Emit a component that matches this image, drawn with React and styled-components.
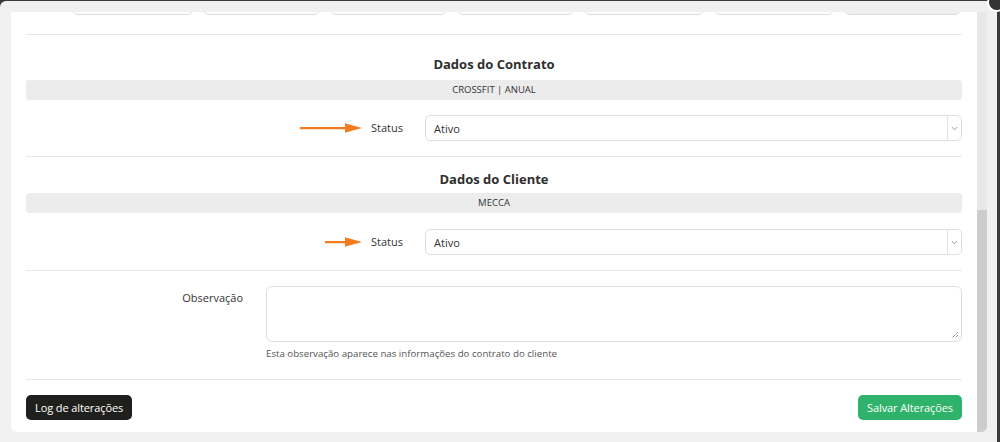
import React from "react";
import styled, { createGlobalStyle } from "styled-components";

const Global = createGlobalStyle`
  html, body { margin: 0; padding: 0; }
  body {
    background: #3a3a3a;
    font-family: "Open Sans", "Liberation Sans", sans-serif;
    color: #333;
    overflow: hidden;
  }
`;

const Page = styled.div`
  width: 1000px;
  height: 442px;
  padding-top: 1px;
  box-sizing: border-box;
  overflow: hidden;
  position: relative;
`;

const Dialog = styled.div`
  width: 997px;
  height: 460px;
  background: #f0f0f0;
  border-radius: 6px 0 0 6px;
  padding: 11px 10px 0 11px;
  box-sizing: border-box;
  display: flex;
  align-items: flex-start;
`;

const Close = styled.div`
  position: absolute;
  right: -6px;
  top: -7px;
  width: 15px;
  height: 15px;
  border-radius: 50%;
  background: #333;
  border: 2px solid #fff;
`;

const Panel = styled.div`
  width: 966px;
  height: 420px;
  background: #fff;
  border-radius: 0 0 0 6px;
  overflow: hidden;
  padding: 0 15px;
  box-sizing: border-box;
  display: flex;
  flex-direction: column;
`;

const Scrollbar = styled.div`
  width: 10px;
  height: 420px;
  background: #e8e8e8;
  display: flex;
  flex-direction: column;
  justify-content: flex-end;
  border-radius: 0 0 6px 0;
  overflow: hidden;
`;

const Thumb = styled.div`
  height: 222px;
  background: #cdcdcd;
`;

const TabRow = styled.div`
  display: flex;
  gap: 10px;
  padding-left: 46px;
  margin-top: -28px;
  height: 31px;
`;

const Tab = styled.div`
  width: ${(p) => p.$w}px;
  height: 31px;
  box-sizing: border-box;
  border: 1px solid #dcdcdc;
  border-radius: 6px;
  background: ${(p) => (p.$muted ? "#efefef" : "#fff")};
`;

const Divider = styled.div`
  height: 1px;
  background: #e6e6e6;
  margin-top: ${(p) => p.$mt || 0}px;
`;

const Title = styled.div`
  text-align: center;
  font-weight: 700;
  font-size: 13px;
  line-height: 20px;
  color: #2e2e2e;
  margin-top: ${(p) => p.$mt}px;
`;

const InfoBar = styled.div`
  margin-top: ${(p) => p.$mt}px;
  height: 20px;
  background: #ececec;
  border-radius: 3px;
  font-size: 9.5px;
  line-height: 20px;
  text-align: center;
  color: #333;
  text-transform: uppercase;
`;

const FieldRow = styled.div`
  display: grid;
  grid-template-columns: ${(p) => p.$label}px 1fr;
  column-gap: ${(p) => p.$gap}px;
  align-items: ${(p) => (p.$top ? "start" : "center")};
  margin-top: ${(p) => p.$mt}px;
`;

const LabelCell = styled.div`
  position: relative;
  text-align: right;
  font-size: 11px;
  line-height: 16px;
  color: #333;
  padding-top: ${(p) => (p.$top ? 4 : 0)}px;
`;

const ArrowMark = styled.svg`
  position: absolute;
  top: 50%;
  right: ${(p) => p.$right}px;
  transform: translateY(-50%);
`;

const SelectBox = styled.div`
  height: 26px;
  box-sizing: border-box;
  border: 1px solid #dedede;
  border-radius: 5px;
  display: flex;
  align-items: stretch;
  font-size: 11px;
  color: #333;
`;

const SelectValue = styled.div`
  flex: 1;
  padding-left: 8px;
  display: flex;
  align-items: center;
`;

const SelectCaret = styled.div`
  width: 13px;
  border-left: 1px solid #e2e2e2;
  display: flex;
  align-items: center;
  justify-content: center;
`;

const TextArea = styled.div`
  position: relative;
  height: 56px;
  box-sizing: border-box;
  border: 1px solid #dedede;
  border-radius: 6px;
`;

const Grip = styled.svg`
  position: absolute;
  right: 2px;
  bottom: 2px;
`;

const Help = styled.div`
  margin-top: 6px;
  font-size: 9.7px;
  line-height: 12px;
  color: #555;
`;

const Footer = styled.div`
  display: flex;
  justify-content: space-between;
  margin-top: 15px;
`;

const Button = styled.div`
  height: 25px;
  padding: 0 ${(p) => p.$px}px;
  border-radius: 5px;
  background: ${(p) => p.$bg};
  color: #fff;
  font-size: 11px;
  letter-spacing: -0.1px;
  line-height: 25px;
`;

function Arrow({ len, right }) {
  return (
    <ArrowMark $right={right} width={len} height="12" viewBox={`0 0 ${len} 12`}>
      <path d={`M0 6.2 L${len - 16} 6.2`} stroke="#f47b20" strokeWidth="2.2" strokeLinecap="round" />
      <path d={`M${len - 17} 1.2 L${len} 6 L${len - 17} 10.8 Z`} fill="#f47b20" />
    </ArrowMark>
  );
}

function Chevron() {
  return (
    <svg width="7" height="5" viewBox="0 0 7 5">
      <path d="M0.8 1 L3.5 3.8 L6.2 1" fill="none" stroke="#a0a0a0" strokeWidth="1" />
    </svg>
  );
}

function StatusRow({ mt, arrowLen, arrowRight }) {
  return (
    <FieldRow $label={377} $gap={22} $mt={mt}>
      <LabelCell>
        <Arrow len={arrowLen} right={arrowRight} />
        Status
      </LabelCell>
      <SelectBox>
        <SelectValue>Ativo</SelectValue>
        <SelectCaret>
          <Chevron />
        </SelectCaret>
      </SelectBox>
    </FieldRow>
  );
}

const tabs = [121, 117, 117, 117, 120, 120, 117];

export default function App() {
  return (
    <Page>
      <Global />
      <Close />
      <Dialog>
        <Panel>
          <TabRow>
            {tabs.map((w, i) => (
              <Tab key={i} $w={w} $muted={i === tabs.length - 1} />
            ))}
          </TabRow>
          <Divider $mt={19} />
          <Title $mt={19}>Dados do Contrato</Title>
          <InfoBar $mt={6}>CROSSFIT | ANUAL</InfoBar>
          <StatusRow mt={15} arrowLen={62} arrowRight={41} />
          <Divider $mt={15} />
          <Title $mt={12}>Dados do Cliente</Title>
          <InfoBar $mt={4}>MECCA</InfoBar>
          <StatusRow mt={16} arrowLen={37} arrowRight={41} />
          <Divider $mt={15} />
          <FieldRow $label={217} $gap={23} $mt={15} $top>
            <LabelCell $top>Observação</LabelCell>
            <div>
              <TextArea>
                <Grip width="8" height="8" viewBox="0 0 8 8">
                  <path d="M7 1 L1 7 M7 4 L4 7" stroke="#666" strokeWidth="1" strokeDasharray="1 1" />
                </Grip>
              </TextArea>
              <Help>Esta observação aparece nas informações do contrato do cliente</Help>
            </div>
          </FieldRow>
          <Divider $mt={19} />
          <Footer>
            <Button $bg="#1f201d" $px={9}>Log de alterações</Button>
            <Button $bg="#2fb36b" $px={9}>Salvar Alterações</Button>
          </Footer>
        </Panel>
        <Scrollbar>
          <Thumb />
        </Scrollbar>
      </Dialog>
    </Page>
  );
}
